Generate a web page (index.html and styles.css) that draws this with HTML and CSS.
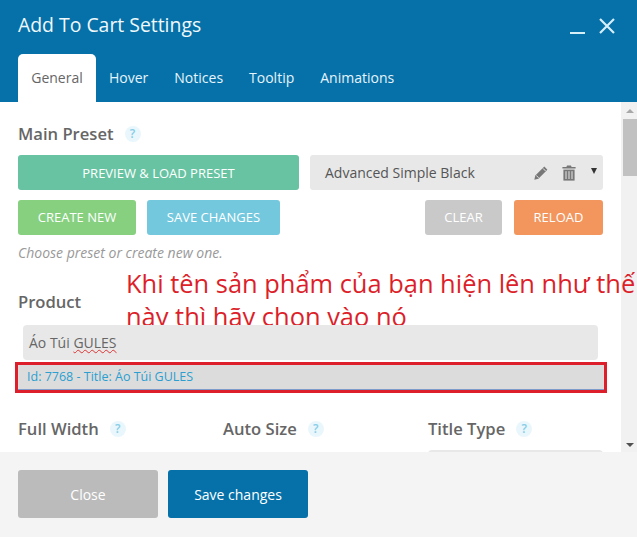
FILE: index.html
```html
<!DOCTYPE html>
<html lang="vi">
<head>
<meta charset="utf-8">
<title>Add To Cart Settings</title>
<link rel="stylesheet" href="styles.css">
</head>
<body>
<div class="modal">
  <header class="header">
    <div class="title-row">
      <h1 class="title">Add To Cart Settings</h1>
      <div class="window-actions">
        <span class="minimize"></span>
        <svg class="close-icon" width="18" height="18" viewBox="0 0 18 18"><path d="M2 2 L16 16 M16 2 L2 16" stroke="#d6eef8" stroke-width="2.2" fill="none"/></svg>
      </div>
    </div>
    <nav class="tabs">
      <span class="tab active">General</span>
      <span class="tab">Hover</span>
      <span class="tab">Notices</span>
      <span class="tab">Tooltip</span>
      <span class="tab">Animations</span>
    </nav>
  </header>
  <div class="body">
    <main class="content">
      <div class="label-row preset-label"><span class="label">Main Preset</span><span class="help">?</span></div>
      <div class="preset-row">
        <button class="btn btn-preview">PREVIEW &amp; LOAD PRESET</button>
        <div class="preset-select">
          <span class="preset-name">Advanced Simple Black</span>
          <svg class="icon-pencil" width="16" height="16" viewBox="0 0 16 16"><path d="M11.3 1.6 L14.4 4.7 L5.4 13.7 L1.3 14.7 L2.3 10.6 Z" fill="#777"/><path d="M3.2 10.4 L5.6 12.8 M10 3.4 L12.6 6" stroke="#e8e8e8" stroke-width="1"/></svg>
          <svg class="icon-trash" width="14" height="16" viewBox="0 0 14 16"><path d="M5 0.5 H9 L9.6 2 H13.6 V3.6 H0.4 V2 H4.4 Z" fill="#777"/><path d="M1.4 4.6 H12.6 V15.6 H1.4 Z" fill="#777"/><path d="M4 6.2 V14 M7 6.2 V14 M10 6.2 V14" stroke="#e8e8e8" stroke-width="1"/></svg>
          <span class="caret"></span>
        </div>
      </div>
      <div class="action-row">
        <button class="btn btn-create">CREATE NEW</button>
        <button class="btn btn-save">SAVE CHANGES</button>
        <span class="spacer"></span>
        <button class="btn btn-clear">CLEAR</button>
        <button class="btn btn-reload">RELOAD</button>
      </div>
      <p class="hint">Choose preset or create new one.</p>
      <div class="label-row product-label"><span class="label">Product</span></div>
      <div class="product-input">Áo Túi <span class="misspelled">GULES</span></div>
      <div class="result-box"><div class="result">Id: 7768 - Title: Áo Túi GULES</div></div>
      <div class="options">
        <div class="option"><div class="label-row"><span class="label">Full Width</span><span class="help">?</span></div></div>
        <div class="option"><div class="label-row"><span class="label">Auto Size</span><span class="help">?</span></div></div>
        <div class="option"><div class="label-row"><span class="label">Title Type</span><span class="help">?</span></div><div class="option-select"></div></div>
      </div>
    </main>
    <div class="scrollbar">
      <span class="arrow-up"></span>
      <span class="thumb"></span>
      <span class="arrow-down"></span>
    </div>
    <div class="annotation">Khi tên sản phẩm của bạn hiện lên như thế<br>này thì hãy chọn vào nó</div>
  </div>
  <footer class="footer">
    <button class="btn btn-close">Close</button>
    <button class="btn btn-primary">Save changes</button>
  </footer>
</div>
</body>
</html>
```
FILE: styles.css
```css
* { box-sizing: border-box; }
html, body { margin: 0; padding: 0; }
body { width: 637px; height: 537px; overflow: hidden; background: #fff; font-family: "Open Sans", sans-serif; }
.modal { display: flex; flex-direction: column; height: 537px; }

.header { height: 102px; background: #0571a8; padding: 0 18px; display: flex; flex-direction: column; flex: none; }
.title-row { height: 54px; display: flex; justify-content: space-between; align-items: flex-start; }
.title { margin: 11px 0 0; font-size: 19.4px; line-height: 28px; font-weight: 400; color: #f0f8fc; }
.window-actions { display: flex; align-items: flex-start; gap: 13px; margin-top: 17px; margin-right: 3px; }
.minimize { width: 15px; height: 2px; background: #d6eef8; margin-top: 15px; }
.close-icon { display: block; }
.tabs { display: flex; height: 48px; }
.tab { font-size: 14px; line-height: 48px; padding: 0 13px; color: #e6f4fb; }
.tab.active { background: #fff; color: #666; border-radius: 5px 5px 0 0; width: 78px; padding: 0; text-align: center; margin-right: 0; }

.body { position: relative; flex: 1; display: flex; min-height: 0; }
.content { position: relative; flex: 1; overflow: hidden; padding: 0 18px; }
.label-row { display: flex; align-items: center; gap: 11px; height: 22px; }
.label { font-size: 16.6px; font-weight: 600; color: #666; line-height: 22px; }
.help { width: 16px; height: 16px; border-radius: 50%; background: #e9f7fc; color: #86cde6; font-size: 12px; font-weight: 600; line-height: 16px; text-align: center; }
.preset-label { margin-top: 21px; }

.btn { border: 0; border-radius: 3px; color: #fff; font-family: "Open Sans", sans-serif; font-size: 13px; height: 35px; padding: 0; }
.preset-row { display: flex; gap: 11px; margin-top: 10px; }
.btn-preview { width: 281px; background: #68c3a3; }
.preset-select { width: 293px; height: 35px; background: #e8e8e8; border-radius: 3px; display: flex; align-items: center; padding-left: 15px; }
.preset-name { font-size: 14px; color: #555; flex: 1; }
.icon-pencil { margin-right: 13px; }
.icon-trash { margin-right: 15px; }
.caret { width: 0; height: 0; border-left: 3.5px solid transparent; border-right: 3.5px solid transparent; border-top: 6px solid #333; margin-right: 6px; margin-bottom: 3px; }

.action-row { display: flex; gap: 11px; margin-top: 10px; }
.action-row .btn { padding-bottom: 2px; }
.spacer { flex: 1; }
.btn-create { width: 118px; background: #86d080; }
.btn-save { width: 133px; background: #74c8de; }
.btn-clear { width: 77px; background: #c9c9c9; }
.btn-reload { width: 89px; background: #f2965e; margin-left: 1px; }

.hint { margin: 10px 0 0; font-size: 14px; line-height: 16px; font-style: italic; color: #999; }
.product-label { margin-top: 30px; }
.product-input { position: relative; z-index: 2; margin: 12px 5px 0; height: 35px; background: #e8e8e8; border-radius: 4px; padding-left: 6px; font-size: 14px; line-height: 35px; color: #666; }
.misspelled { text-decoration: underline wavy #d33; text-decoration-thickness: 1px; }
.result-box { position: relative; z-index: 2; margin: 2px -4px 0 -3px; height: 31px; border: 3px solid #dc1f2a; }
.result { height: 25px; background: #dcdcdc; border-bottom: 1px solid #7d9ccb; padding-left: 9px; font-size: 12.5px; line-height: 23px; color: #2a9fd0; }

.options { display: grid; grid-template-columns: repeat(3, 175px); column-gap: 30px; margin-top: 25px; }
.option-select { height: 30px; background: #e8e8e8; border-radius: 4px; margin-top: 10px; }

.annotation { position: absolute; left: 126px; top: 165px; white-space: nowrap; font-size: 25.45px; line-height: 33px; color: #dc1f2a; z-index: 1; font-family: "Open Sans", sans-serif; }

.scrollbar { width: 16px; flex: none; background: #f1f1f1; display: flex; flex-direction: column; align-items: center; padding: 7px 0 0 1px; position: relative; }
.arrow-up { width: 0; height: 0; border-left: 4px solid transparent; border-right: 4px solid transparent; border-bottom: 4px solid #a8a8a8; }
.thumb { width: 14px; height: 57px; background: #c1c1c1; margin-top: 6px; }
.arrow-down { width: 0; height: 0; border-left: 4px solid transparent; border-right: 4px solid transparent; border-top: 4px solid #505050; margin-top: auto; margin-bottom: 5px; }

.footer { height: 85px; flex: none; background: #f4f4f4; display: flex; gap: 10px; padding: 18px 18px 0; }
.btn-close, .btn-primary { width: 140px; height: 48px; font-size: 14px; }
.btn-close { background: #bbb; }
.btn-primary { background: #0571a8; }
```
